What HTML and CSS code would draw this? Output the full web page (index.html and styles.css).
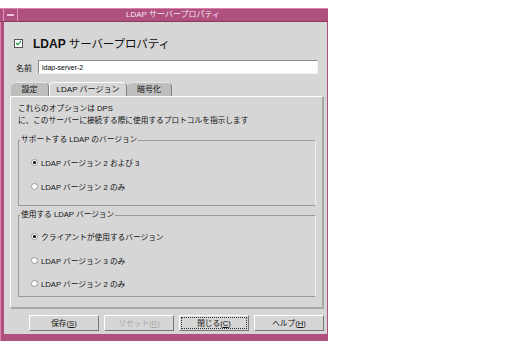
FILE: index.html
```html
<!DOCTYPE html>
<html lang="ja">
<head>
  <meta charset="UTF-8" />
  <title>LDAP サーバープロパティ</title>
  <link rel="stylesheet" href="styles.css">
</head>
<body>
  <div class="window">
    <div class="titlebar">
      <span class="menu-btn"><span class="dash"></span></span>
      <span class="title">LDAP サーバープロパティ</span>
    </div>
    <div class="frame">
      <div class="content">
        <div class="heading">
          <span class="check">
            <svg width="8" height="8" viewBox="0 0 8 8"><path d="M1.2 4 L3.2 6 L6.8 1.8" fill="none" stroke="#1a8a3a" stroke-width="1.3"/></svg>
          </span>
          <span class="heading-text"><b>LDAP</b> サーバープロパティ</span>
        </div>

        <div class="name-row">
          <label>名前</label>
          <input type="text" value="ldap-server-2" />
        </div>

        <div class="tabs">
          <div class="tab tab-1">設定</div>
          <div class="tab tab-2 active">LDAP バージョン</div>
          <div class="tab tab-3">暗号化</div>
        </div>

        <div class="panel">
          <p class="desc">これらのオプションは DPS<br/>に、このサーバーに接続する際に使用するプロトコルを指示します</p>

          <fieldset class="group group-1">
            <legend>サポートする LDAP のバージョン</legend>
            <div class="radio"><span class="dot on"></span>LDAP バージョン 2 および 3</div>
            <div class="radio"><span class="dot"></span>LDAP バージョン 2 のみ</div>
          </fieldset>

          <fieldset class="group group-2">
            <legend>使用する LDAP バージョン</legend>
            <div class="radio"><span class="dot on"></span>クライアントが使用するバージョン</div>
            <div class="radio"><span class="dot"></span>LDAP バージョン 3 のみ</div>
            <div class="radio"><span class="dot"></span>LDAP バージョン 2 のみ</div>
          </fieldset>
        </div>

        <div class="buttons">
          <button>保存(<u>S</u>)</button>
          <button disabled>リセット(<u>R</u>)</button>
          <button class="focus">閉じる(<u>C</u>)</button>
          <button>ヘルプ(<u>H</u>)</button>
        </div>
      </div>
    </div>
  </div>
</body>
</html>
```

FILE: styles.css
```css
body {
  margin: 0;
  background: #ffffff;
  font-family: "Liberation Sans", "Noto Sans CJK JP", sans-serif;
  color: #111;
}
.window {
  width: 328px;
  margin-top: 8px;
}
.titlebar {
  display: flex;
  align-items: center;
  height: 12px;
  background: #b0507e;
  border-top: 1px solid #d884ac;
  border-bottom: 1px solid #8a3a60;
}
.menu-btn {
  display: flex;
  align-items: center;
  justify-content: center;
  width: 13px;
  height: 12px;
  margin-left: 3px;
  border-left: 1px solid #e096ba;
  border-right: 1px solid #e096ba;
}
.dash {
  width: 7px;
  height: 2px;
  background: #f2c4da;
}
.title {
  flex: 1;
  text-align: center;
  color: #f6e8f0;
  font-size: 8px;
  line-height: 12px;
}
.frame {
  background: #b0507e;
  border-left: 1px solid #d884ac;
  padding: 0 1px 7px 3px;
}
.content {
  background: #d6d6d6;
  padding: 13px 3px 3px 6px;
}
.heading {
  display: flex;
  align-items: center;
  gap: 10px;
  height: 16px;
  margin-left: 4px;
}
.heading-text {
  font-size: 11.5px;
  letter-spacing: -0.1px;
}
.heading-text b {
  font-size: 12px;
  letter-spacing: 0;
}
.check {
  display: flex;
  align-items: center;
  justify-content: center;
  width: 7px;
  height: 7px;
  background: #fff;
  border: 1px solid #555;
}
.name-row {
  display: flex;
  align-items: center;
  gap: 6px;
  margin: 9px 0 0 6px;
  font-size: 8px;
}
.name-row label {
  flex-shrink: 0;
}
.name-row input {
  box-sizing: border-box;
  width: 280px;
  height: 14px;
  padding: 0 3px;
  border: 1px solid #888;
  border-right-color: #f4f4f4;
  border-bottom-color: #f4f4f4;
  font-family: "Liberation Sans", sans-serif;
  font-size: 7px;
}
.tabs {
  display: flex;
  height: 14px;
  margin: 8px 0 0 1px;
  font-size: 8px;
  line-height: 13px;
}
.tab {
  box-sizing: border-box;
  text-align: center;
  background: #bebebe;
  border-top: 1px solid #e6e6e6;
  border-right: 1px solid #808080;
  border-radius: 5px 5px 0 0;
}
.tab-1 { width: 38px; }
.tab-2 { width: 78px; }
.tab-3 { width: 45px; }
.tab.active {
  background: #d6d6d6;
  border-left: 1px solid #fff;
  border-top-color: #fff;
}
.panel {
  border-top: 1px solid #fff;
  border-left: 1px solid #fff;
  border-right: 2px solid #a8a8a8;
  border-bottom: 2px solid #a8a8a8;
  padding: 6px 6px 10px 7px;
}
.desc {
  margin: 0 0 8px;
  font-size: 7.7px;
  line-height: 12px;
}
.group {
  margin: 0;
  padding: 6px 10px 7px;
  border: 1px solid #9a9a9a;
  border-right-color: #efefef;
  border-bottom-color: #9a9a9a;
  font-size: 7.7px;
}
.group-2 {
  margin-top: 4px;
  padding-top: 5px;
  padding-bottom: 0;
}
.group legend {
  padding: 0 1px;
  margin-left: -9px;
  line-height: 10px;
}
.radio {
  display: flex;
  align-items: center;
  gap: 3px;
  height: 23.5px;
  margin-left: 2px;
}
.dot {
  width: 7px;
  height: 7px;
  border-radius: 50%;
  border: 1px solid #999;
  background: #fff;
  box-sizing: border-box;
  position: relative;
}
.dot.on::after {
  content: "";
  position: absolute;
  left: 1px;
  top: 1px;
  width: 3px;
  height: 3px;
  border-radius: 50%;
  background: #000;
}
.buttons {
  display: flex;
  gap: 5px;
  margin: 6px 0 0 19px;
}
button {
  width: 70px;
  height: 16px;
  padding: 0;
  background: #d6d6d6;
  border: 1px solid #fff;
  border-right-color: #777;
  border-bottom-color: #777;
  font-family: "Liberation Sans", "Noto Sans CJK JP", sans-serif;
  font-size: 7.7px;
  color: #111;
}
button:disabled {
  color: #a8a8a8;
}
button.focus {
  outline: 1px dotted #333;
  outline-offset: -3px;
}
```
